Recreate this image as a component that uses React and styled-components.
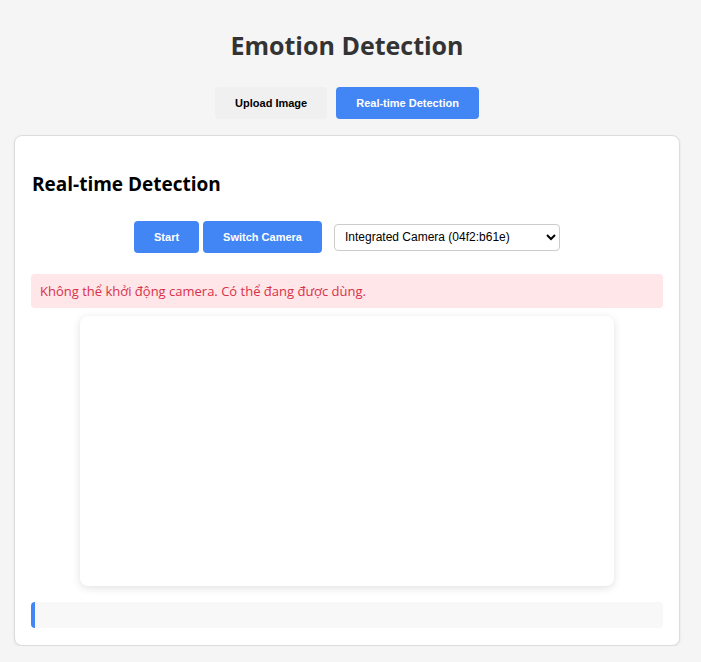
import React from "react";
import styled, { createGlobalStyle } from "styled-components";

const Global = createGlobalStyle`
  html, body { margin: 0; padding: 0; background: #f5f5f5; }
  body { font-family: "Open Sans", "Segoe UI", sans-serif; color: #333; }
`;

const Page = styled.div`
  width: 666px;
  margin-left: 14px;
  padding-top: 27px;
  display: flex;
  flex-direction: column;
  align-items: center;
`;

const Title = styled.h1`
  margin: 0;
  font-family: "Open Sans", sans-serif;
  font-size: 25px;
  line-height: 36px;
  font-weight: 700;
  color: #333;
`;

const Tabs = styled.div`
  display: flex;
  gap: 9px;
  margin-top: 24px;
`;

const Tab = styled.button`
  height: 32px;
  padding: 0 20px;
  border: none;
  border-radius: 4px;
  font-family: "Liberation Sans", Arial, sans-serif;
  font-weight: 700;
  font-size: 11px;
  cursor: pointer;
  background: ${(p) => (p.$active ? "#4285f4" : "#f0f0f0")};
  color: ${(p) => (p.$active ? "#fff" : "#000")};
`;

const Card = styled.section`
  align-self: stretch;
  margin-top: 16px;
  background: #fff;
  border: 1px solid #ddd;
  border-radius: 8px;
  box-shadow: 0 1px 3px rgba(0, 0, 0, 0.08);
  padding: 0 16px 17px;
  display: flex;
  flex-direction: column;
`;

const Heading = styled.h2`
  margin: 35px 0 0 1px;
  font-family: "Open Sans", sans-serif;
  font-size: 19px;
  line-height: 26px;
  font-weight: 700;
  color: #000;
`;

const Controls = styled.div`
  margin-top: 24px;
  display: flex;
  justify-content: center;
  align-items: center;
`;

const Btn = styled.button`
  height: 32px;
  padding: 0 20px;
  margin-right: ${(p) => p.$gap || 0}px;
  border: none;
  border-radius: 4px;
  background: #4285f4;
  color: #fff;
  font-family: "Liberation Sans", Arial, sans-serif;
  font-weight: 700;
  font-size: 11px;
  cursor: pointer;
`;

const Select = styled.select`
  width: 226px;
  height: 27px;
  padding: 0 6px 0 6px;
  border: 1px solid #ccc;
  border-radius: 4px;
  background: #fff;
  font-family: "Liberation Sans", Arial, sans-serif;
  font-size: 12px;
  color: #000;
`;

const ErrorBox = styled.div`
  margin-top: 21px;
  height: 34px;
  display: flex;
  align-items: center;
  padding: 0 9px;
  background: #ffe6e8;
  border-radius: 4px;
  color: #d9304a;
  font-family: "Open Sans", sans-serif;
  font-size: 13px;
`;

const Video = styled.div`
  align-self: center;
  margin-top: 8px;
  width: 534px;
  height: 270px;
  background: #fff;
  border-radius: 8px;
  box-shadow: 0 2px 8px rgba(0, 0, 0, 0.12);
`;

const Status = styled.div`
  margin-top: 16px;
  height: 26px;
  background: #f8f8f8;
  border-left: 4px solid #4285f4;
  border-radius: 4px;
`;

export default function App() {
  return (
    <>
      <Global />
      <Page>
        <Title>Emotion Detection</Title>
        <Tabs>
          <Tab>Upload Image</Tab>
          <Tab $active>Real-time Detection</Tab>
        </Tabs>
        <Card>
          <Heading>Real-time Detection</Heading>
          <Controls>
            <Btn $gap={4}>Start</Btn>
            <Btn $gap={12}>Switch Camera</Btn>
            <Select defaultValue="cam">
              <option value="cam">Integrated Camera (04f2:b61e)</option>
            </Select>
          </Controls>
          <ErrorBox>Không thể khởi động camera. Có thể đang được dùng.</ErrorBox>
          <Video />
          <Status />
        </Card>
      </Page>
    </>
  );
}
